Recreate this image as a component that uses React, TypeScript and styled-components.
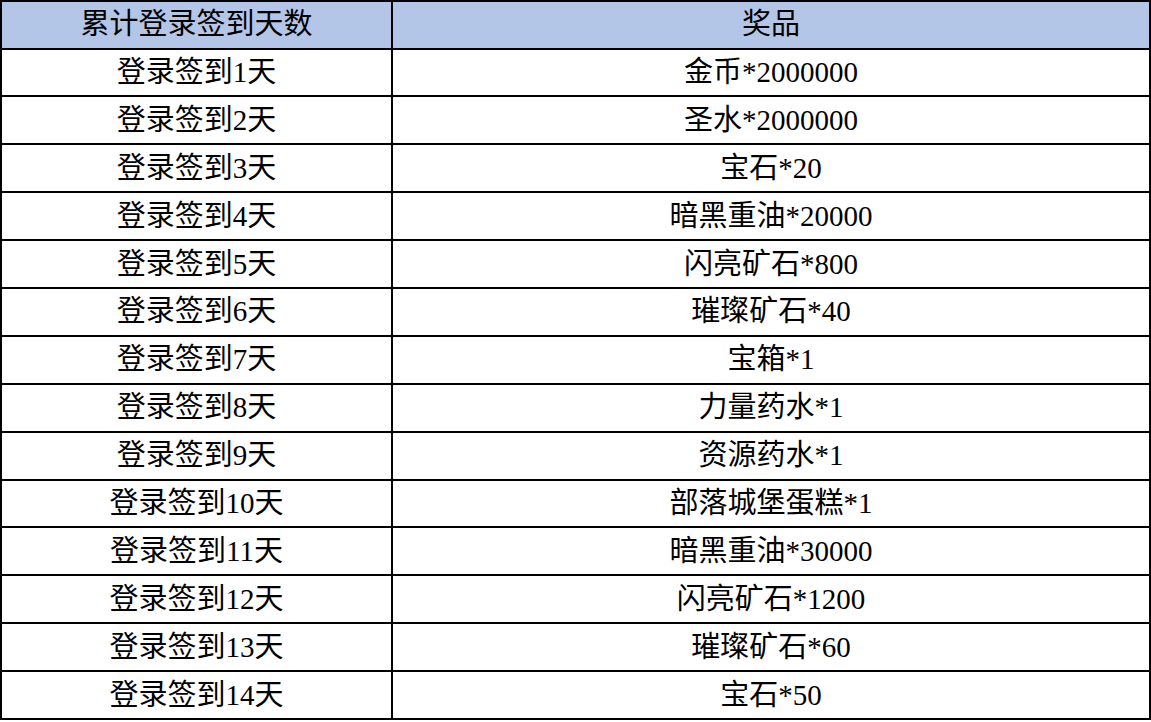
import React, { FC } from "react";
import styled, { createGlobalStyle } from "styled-components";

const GlobalStyle = createGlobalStyle`
  html, body {
    margin: 0;
    padding: 0;
    background: #ffffff;
  }
`;

const Sheet = styled.table`
  width: 1151px;
  border-collapse: collapse;
  table-layout: fixed;
  font-family: "Liberation Serif", "Times New Roman", "DejaVu Serif", "Noto Sans CJK SC", serif;
  font-size: 29px;
  color: #000000;
`;

const HeadCell = styled.th<{ wide?: boolean }>`
  width: ${({ wide }) => (wide ? "auto" : "389px")};
  height: 45.5px;
  padding: 0;
  background: #b4c6e7;
  border: 2.5px solid #000000;
  font-weight: normal;
  text-align: center;
  line-height: 45px;
`;

const Cell = styled.td`
  height: 45.9px;
  padding: 0;
  border: 2.5px solid #000000;
  text-align: center;
  line-height: 45px;
  white-space: nowrap;
`;

type Reward = {
  day: number;
  prize: string;
};

const rewards: Reward[] = [
  { day: 1, prize: "金币*2000000" },
  { day: 2, prize: "圣水*2000000" },
  { day: 3, prize: "宝石*20" },
  { day: 4, prize: "暗黑重油*20000" },
  { day: 5, prize: "闪亮矿石*800" },
  { day: 6, prize: "璀璨矿石*40" },
  { day: 7, prize: "宝箱*1" },
  { day: 8, prize: "力量药水*1" },
  { day: 9, prize: "资源药水*1" },
  { day: 10, prize: "部落城堡蛋糕*1" },
  { day: 11, prize: "暗黑重油*30000" },
  { day: 12, prize: "闪亮矿石*1200" },
  { day: 13, prize: "璀璨矿石*60" },
  { day: 14, prize: "宝石*50" },
];

const App: FC = () => {
  return (
    <>
      <GlobalStyle />
      <Sheet>
        <thead>
          <tr>
            <HeadCell>累计登录签到天数</HeadCell>
            <HeadCell wide>奖品</HeadCell>
          </tr>
        </thead>
        <tbody>
          {rewards.map((r) => (
            <tr key={r.day}>
              <Cell>登录签到{r.day}天</Cell>
              <Cell>{r.prize}</Cell>
            </tr>
          ))}
        </tbody>
      </Sheet>
    </>
  );
};

export default App;
